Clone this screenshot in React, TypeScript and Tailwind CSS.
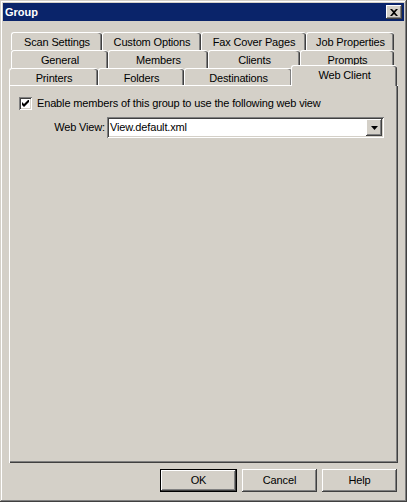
const raised =
  "shadow-[inset_-1px_-1px_0_#404040,inset_1px_1px_0_#ffffff,inset_-2px_-2px_0_#808080]";
const sunken =
  "shadow-[inset_1px_1px_0_#808080,inset_-1px_-1px_0_#ffffff,inset_2px_2px_0_#404040,inset_-2px_-2px_0_#d4d0c8]";

type Tab = { label: string; w: string };

const row1: Tab[] = [
  { label: "Scan Settings", w: "w-[91px]" },
  { label: "Custom Options", w: "w-[99px]" },
  { label: "Fax Cover Pages", w: "w-[105px]" },
  { label: "Job Properties", w: "w-[88px]" },
];

const row2: Tab[] = [
  { label: "General", w: "w-[97px]" },
  { label: "Members", w: "w-[100px]" },
  { label: "Clients", w: "w-[92px]" },
  { label: "Prompts", w: "w-[94px]" },
];

const row3: Tab[] = [
  { label: "Printers", w: "w-[89px]" },
  { label: "Folders", w: "w-[86px]" },
  { label: "Destinations", w: "w-[108px]" },
];

function TabItem({ label, w }: Tab) {
  return (
    <div
      className={`${w} h-full flex items-start justify-center pt-[1px] rounded-t-[3px] border-t border-l border-white shadow-[inset_-1px_0_0_#404040,inset_-2px_0_0_#808080]`}
    >
      {label}
    </div>
  );
}

function Button({ label, primary }: { label: string; primary?: boolean }) {
  return (
    <div
      className={`h-[23px] w-[75px] flex items-center justify-center ${
        primary ? "w-[77px] border border-black" : ""
      }`}
    >
      <div className={`w-full h-full flex items-center justify-center ${raised}`}>{label}</div>
    </div>
  );
}

export default function App() {
  return (
    <div
      className="w-[407px] h-[502px] p-[3px] flex flex-col bg-[#d4d0c8] text-[11px] tracking-[-0.15px] text-black shadow-[inset_-1px_-1px_0_#404040,inset_1px_1px_0_#d4d0c8,inset_-2px_-2px_0_#808080,inset_2px_2px_0_#ffffff]"
      style={{ fontFamily: '"Liberation Sans", Arial, sans-serif' }}
    >
      {/* title bar */}
      <div className="h-[18px] bg-[#0a246a] flex items-center justify-between pl-[2px] pr-[2px]">
        <span className="text-white font-bold text-[11px] tracking-normal leading-none">Group</span>
        <div className={`w-[16px] h-[14px] bg-[#d4d0c8] flex items-center justify-center ${raised}`}>
          <svg width="8" height="7" viewBox="0 0 8 7">
            <path d="M0 0h2l2 2 2-2h2L5 3.5 8 7H6L4 5 2 7H0l3-3.5z" fill="#000" />
          </svg>
        </div>
      </div>

      <div className="flex-1 flex flex-col pl-[6px] pt-[11px]">
        {/* tabs */}
        <div className="flex flex-col">
          <div className="flex h-[18px] ml-[2px]">
            {row1.map((t) => (
              <TabItem key={t.label} {...t} />
            ))}
          </div>
          <div className="flex h-[18px] ml-[2px]">
            {row2.map((t) => (
              <TabItem key={t.label} {...t} />
            ))}
          </div>
          <div className="flex h-[17px] items-end">
            {row3.map((t) => (
              <TabItem key={t.label} {...t} />
            ))}
            <div className="relative z-10 w-[106px] h-[21px] -mb-[1px] -ml-[1px] bg-[#d4d0c8] flex items-start justify-center pt-[1px] rounded-t-[3px] border-t border-l border-white shadow-[inset_-1px_0_0_#404040,inset_-2px_0_0_#808080]">
              Web Client
            </div>
          </div>
        </div>

        {/* panel */}
        <div className="w-[389px] h-[378px] border-t border-l border-white shadow-[inset_-1px_-1px_0_#404040,inset_-2px_-2px_0_#808080] pl-[9px] pt-[11px]">
          <div className="flex items-center gap-[5px] h-[13px]">
            <div className={`w-[13px] h-[13px] bg-white flex items-center justify-center ${sunken}`}>
              <svg width="7" height="7" viewBox="0 0 7 7">
                <path d="M0 2v3l2 2 5-5V-1L2 4z" fill="#000" />
              </svg>
            </div>
            <span>Enable members of this group to use the following web view</span>
          </div>
          <div className="flex items-center mt-[7px] ml-[31px]">
            <span className="w-[57px] text-right pr-[2px]">Web View:</span>
            <div className={`w-[277px] h-[21px] bg-white flex items-center justify-between pl-[3px] pr-[2px] ${sunken}`}>
              <span>View.default.xml</span>
              <div className={`w-[16px] h-[17px] bg-[#d4d0c8] flex items-center justify-center ${raised}`}>
                <svg width="7" height="4" viewBox="0 0 7 4">
                  <path d="M0 0h7L3.5 4z" fill="#000" />
                </svg>
              </div>
            </div>
          </div>
        </div>

        {/* buttons */}
        <div className="flex justify-end gap-[5px] mt-[6px] w-[389px] pr-[1px]">
          <Button label="OK" primary />
          <Button label="Cancel" />
          <Button label="Help" />
        </div>
      </div>
    </div>
  );
}
